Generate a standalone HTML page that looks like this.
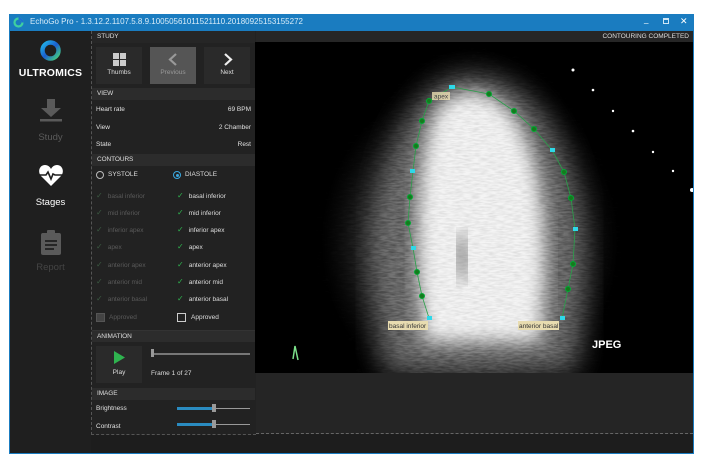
<!DOCTYPE html>
<html><head><meta charset="utf-8"><style>
*{margin:0;padding:0;box-sizing:border-box}
body{width:707px;height:461px;background:#fff;position:relative;overflow:hidden;font-family:"Liberation Sans",sans-serif;font-size:7px;color:#ddd}
.a{position:absolute}
.hd{position:absolute;left:92px;width:163px;height:12px;background:#2c2c2c;font-size:6.5px;color:#ddd;padding:2px 0 0 5px;letter-spacing:-0.1px}
.row{position:absolute;left:96px;width:155px;font-size:6.5px;color:#e0e0e0}
.row span{position:absolute;right:0}
.btn{position:absolute;top:47px;width:46px;height:37px;background:#2a2a2a;text-align:center;font-size:6.5px;color:#ddd}
.ck{position:absolute;font-size:6.5px}
.ck i{font-style:normal;color:#2fb34f;margin-right:5px;font-size:8px}
.dim{color:#5a5a5a}.dim i{color:#3b5a42}
.nav{position:absolute;left:10px;width:81px;text-align:center;font-size:9.5px}
</style></head><body>
<div class="a" style="left:9px;top:14px;width:685px;height:440px;background:#1d1d1d;border:1px solid #1a7cc0"></div>
<div class="a" style="left:9px;top:14px;width:685px;height:17px;background:#1a7cc0"></div>
<svg class="a" style="left:13px;top:17px" width="11" height="11"><circle cx="5.5" cy="5.5" r="4" fill="none" stroke="#3fd0a0" stroke-width="2.2"/><path d="M5.5 1.5 A4 4 0 0 1 9.5 5.5" fill="none" stroke="#1e6fd0" stroke-width="2.2"/></svg>
<div class="a" style="left:30px;top:17px;font-size:8px;color:#d8ecf8">EchoGo Pro - 1.3.12.2.1107.5.8.9.10050561011521110.20180925153155272</div>
<div class="a" style="left:644px;top:15px;font-size:8px;color:#fff">_</div>
<div class="a" style="left:663px;top:18px;width:6px;height:6px;border:1px solid #cfe6f5;border-top-width:2px"></div>
<div class="a" style="left:680px;top:16px;font-size:9px;color:#fff">✕</div>
<div class="a" style="left:10px;top:32px;width:81px;height:421px;background:#1f1f1f"></div>
<svg class="a" style="left:39px;top:39px" width="23" height="23"><defs><linearGradient id="g" x1="0" y1="0" x2="1" y2="1"><stop offset="0" stop-color="#21b6e8"/><stop offset=".5" stop-color="#1a5fd0"/><stop offset="1" stop-color="#47d27a"/></linearGradient></defs><circle cx="11.5" cy="11.5" r="8" fill="none" stroke="url(#g)" stroke-width="4.5"/></svg>
<div class="nav" style="top:67px;font-weight:bold;color:#fff;font-size:10.5px;letter-spacing:0.2px">ULTROMICS</div>
<svg class="a" style="left:39px;top:98px" width="24" height="25"><path d="M8 1h8v9h6l-10 9-10-9h6z" fill="#5a5a5a"/><rect x="1" y="21" width="22" height="2.5" fill="#5a5a5a"/></svg>
<div class="nav" style="top:132px;color:#5a5a5a">Study</div>
<svg class="a" style="left:38px;top:165px" width="26" height="22"><path d="M13 21 L3 11 C-1 6 2 0 7 0 C10 0 12 2 13 4 C14 2 16 0 19 0 C24 0 27 6 23 11Z" fill="#fff"/><path d="M1 10h7l2-3 3 7 2-5 2 1h8" fill="none" stroke="#1f1f1f" stroke-width="1.6"/></svg>
<div class="nav" style="top:197px;color:#fff">Stages</div>
<svg class="a" style="left:41px;top:230px" width="20" height="25"><rect x="0" y="3" width="20" height="22" rx="2" fill="#5a5a5a"/><rect x="6" y="0" width="8" height="5" rx="1" fill="#5a5a5a"/><path d="M4 11h12M4 15h12M4 19h9" stroke="#1f1f1f" stroke-width="1.8"/></svg>
<div class="nav" style="top:262px;color:#444">Report</div>
<div class="a" style="left:91px;top:31px;width:165px;height:404px;border:1px dashed #555;border-top:none;border-right:none;background:#222"></div>
<div class="hd" style="top:31px;background:#262626">STUDY</div>
<div class="btn" style="left:96px"><svg style="margin-top:6px" width="13" height="13"><rect x="0" y="0" width="6" height="6" fill="#ccc"/><rect x="7" y="0" width="6" height="6" fill="#ccc"/><rect x="0" y="7" width="6" height="6" fill="#ccc"/><rect x="7" y="7" width="6" height="6" fill="#ccc"/></svg><div style="margin-top:1px">Thumbs</div></div>
<div class="btn" style="left:150px;background:#555;color:#999"><svg style="margin-top:6px" width="13" height="13"><path d="M9 1L3 6.5 9 12" fill="none" stroke="#999" stroke-width="2.2"/></svg><div style="margin-top:1px">Previous</div></div>
<div class="btn" style="left:204px"><svg style="margin-top:6px" width="13" height="13"><path d="M4 1l6 5.5L4 12" fill="none" stroke="#eee" stroke-width="2.2"/></svg><div style="margin-top:1px">Next</div></div>
<div class="hd" style="top:88px">VIEW</div>
<div class="row" style="top:106px">Heart rate<span>69 BPM</span></div>
<div class="row" style="top:124px">View<span>2 Chamber</span></div>
<div class="row" style="top:141px">State<span>Rest</span></div>
<div class="hd" style="top:154px">CONTOURS</div>
<div class="a" style="left:96px;top:171px;width:8px;height:8px;border:1px solid #bbb;border-radius:50%"></div>
<div class="a" style="left:108px;top:171px;font-size:6.5px">SYSTOLE</div>
<div class="a" style="left:173px;top:171px;width:8px;height:8px;border:1px solid #3aa8e0;border-radius:50%"><div style="margin:1.5px;width:3px;height:3px;background:#3aa8e0;border-radius:50%"></div></div>
<div class="a" style="left:185px;top:171px;font-size:6.5px">DIASTOLE</div>
<div class="ck dim" style="left:96px;top:191px"><i>✓</i>basal inferior</div>
<div class="ck dim" style="left:96px;top:208px"><i>✓</i>mid inferior</div>
<div class="ck dim" style="left:96px;top:225px"><i>✓</i>inferior apex</div>
<div class="ck dim" style="left:96px;top:242px"><i>✓</i>apex</div>
<div class="ck dim" style="left:96px;top:260px"><i>✓</i>anterior apex</div>
<div class="ck dim" style="left:96px;top:277px"><i>✓</i>anterior mid</div>
<div class="ck dim" style="left:96px;top:294px"><i>✓</i>anterior basal</div>
<div class="ck" style="left:177px;top:191px"><i>✓</i>basal inferior</div>
<div class="ck" style="left:177px;top:208px"><i>✓</i>mid inferior</div>
<div class="ck" style="left:177px;top:225px"><i>✓</i>inferior apex</div>
<div class="ck" style="left:177px;top:242px"><i>✓</i>apex</div>
<div class="ck" style="left:177px;top:260px"><i>✓</i>anterior apex</div>
<div class="ck" style="left:177px;top:277px"><i>✓</i>anterior mid</div>
<div class="ck" style="left:177px;top:294px"><i>✓</i>anterior basal</div>
<div class="a" style="left:96px;top:313px;width:9px;height:9px;background:#444;border:1px solid #555"></div>
<div class="ck dim" style="left:109px;top:314px">Approved</div>
<div class="a" style="left:177px;top:313px;width:9px;height:9px;border:1px solid #ccc"></div>
<div class="ck" style="left:191px;top:314px">Approved</div>
<div class="hd" style="top:330px;border-top:1px solid #333">ANIMATION</div>
<div class="a" style="left:96px;top:346px;width:46px;height:37px;background:#2a2a2a;text-align:center;font-size:6.5px"><svg style="margin-top:5px" width="12" height="13"><path d="M1 0L12 6.5 1 13z" fill="#2fb34f"/></svg><div style="margin-top:3px">Play</div></div>
<div class="a" style="left:151px;top:353px;width:99px;height:2px;background:#777"></div>
<div class="a" style="left:151px;top:349px;width:3px;height:8px;background:#999"></div>
<div class="a" style="left:151px;top:370px;font-size:6.5px">Frame 1 of 27</div>
<div class="hd" style="top:388px">IMAGE</div>
<div class="row" style="top:405px">Brightness</div>
<div class="row" style="top:423px">Contrast</div>
<div class="a" style="left:177px;top:407px;width:37px;height:3px;background:#2a8bc0"></div>
<div class="a" style="left:214px;top:408px;width:36px;height:1px;background:#999"></div>
<div class="a" style="left:212px;top:404px;width:4px;height:8px;background:#999"></div>
<div class="a" style="left:177px;top:423px;width:37px;height:3px;background:#2a8bc0"></div>
<div class="a" style="left:214px;top:424px;width:36px;height:1px;background:#999"></div>
<div class="a" style="left:212px;top:420px;width:4px;height:8px;background:#999"></div>
<div class="a" style="left:256px;top:31px;width:437px;height:11px;background:#262626"></div>
<div class="a" style="left:560px;top:33px;width:129px;text-align:right;font-size:6.5px;color:#ddd">CONTOURING COMPLETED</div>
<div class="a" style="left:256px;top:372px;width:437px;height:62px;background:#252525;border-bottom:1px dashed #666"></div>
<svg class="a" style="left:255px;top:42px" width="438" height="331">
<defs>
<radialGradient id="halo" cx="0.5" cy="0.5" r="0.5"><stop offset="0" stop-color="#999"/><stop offset=".55" stop-color="#555"/><stop offset="1" stop-color="#000" stop-opacity="0"/></radialGradient>
<filter id="bl"><feGaussianBlur stdDeviation="9"/></filter>
<filter id="bl2"><feGaussianBlur stdDeviation="14"/></filter>
<filter id="st" x="0" y="0" width="1" height="1"><feTurbulence type="fractalNoise" baseFrequency="0.12 0.6" numOctaves="2" seed="3"/><feColorMatrix values="0 0 0 0 0  0 0 0 0 0  0 0 0 0 0  0 0 0 -1.6 1.1"/></filter>
</defs>
<rect width="438" height="331" fill="#000"/>
<ellipse cx="215" cy="200" rx="160" ry="175" fill="url(#halo)"/>
<path d="M130 330 C110 220 125 110 165 60 C195 20 250 25 285 70 C330 130 335 240 320 330 Z" fill="#777" filter="url(#bl2)"/>
<rect width="438" height="331" filter="url(#st)" opacity="0.3"/>
<path d="M170 300 C158 220 160 120 180 72 C198 42 238 44 260 78 C292 125 295 215 285 300 Z" fill="#f4f4f4" filter="url(#bl)"/>
<rect width="438" height="331" filter="url(#st)" opacity="0.1"/>
<ellipse cx="207" cy="215" rx="5" ry="25" fill="#555" filter="url(#bl)"/>
<polyline points="174,276 167,254 162,230 158,206 153,181 155,155 158,129 161,104 167,79 174,59 197,45 234,52 259,69 279,87 297,108 309,130 316,156 320,187 318,222 313,247 307,276" fill="none" stroke="#2aa04a" stroke-width="0.8"/>
<g fill="#167a1e" stroke="#0a3">
<circle cx="174" cy="59" r="2.5"/><circle cx="167" cy="79" r="2.5"/><circle cx="161" cy="104" r="2.5"/><circle cx="155" cy="155" r="2.5"/><circle cx="153" cy="181" r="2.5"/><circle cx="162" cy="230" r="2.5"/><circle cx="167" cy="254" r="2.5"/>
<circle cx="234" cy="52" r="2.5"/><circle cx="259" cy="69" r="2.5"/><circle cx="279" cy="87" r="2.5"/><circle cx="309" cy="130" r="2.5"/><circle cx="316" cy="156" r="2.5"/><circle cx="318" cy="222" r="2.5"/><circle cx="313" cy="247" r="2.5"/>
</g>
<g fill="#2fd8e8"><rect x="194" y="43" width="6" height="4"/><rect x="155" y="127" width="5" height="4"/><rect x="156" y="204" width="5" height="4"/><rect x="172" y="274" width="5" height="4"/><rect x="295" y="106" width="5" height="4"/><rect x="318" y="185" width="5" height="4"/><rect x="305" y="274" width="5" height="4"/></g>
<rect x="177" y="50" width="18" height="8" fill="#e8dcb0" opacity=".8"/><text x="179" y="56.5" font-size="6.5" fill="#444" font-family="Liberation Sans">apex</text>
<rect x="133" y="279" width="40" height="9" fill="#e8dcb0"/><text x="134" y="286" font-size="6.5" fill="#333" font-family="Liberation Sans">basal inferior</text>
<rect x="263" y="279" width="41" height="9" fill="#e8dcb0"/><text x="264" y="286" font-size="6.5" fill="#333" font-family="Liberation Sans">anterior basal</text>
<text x="337" y="306" font-size="11" font-weight="bold" fill="#fff" font-family="Liberation Sans">JPEG</text>
<path d="M38 317 L40 304 L43 318" fill="none" stroke="#7ce08a" stroke-width="1.5"/>
<g fill="#fff"><circle cx="318" cy="28" r="1.5"/><circle cx="338" cy="48" r="1.3"/><circle cx="358" cy="69" r="1.2"/><circle cx="378" cy="89" r="1.3"/><circle cx="398" cy="110" r="1.2"/><circle cx="418" cy="129" r="1.2"/><circle cx="437" cy="148" r="2"/></g>
</svg>
</body></html>
